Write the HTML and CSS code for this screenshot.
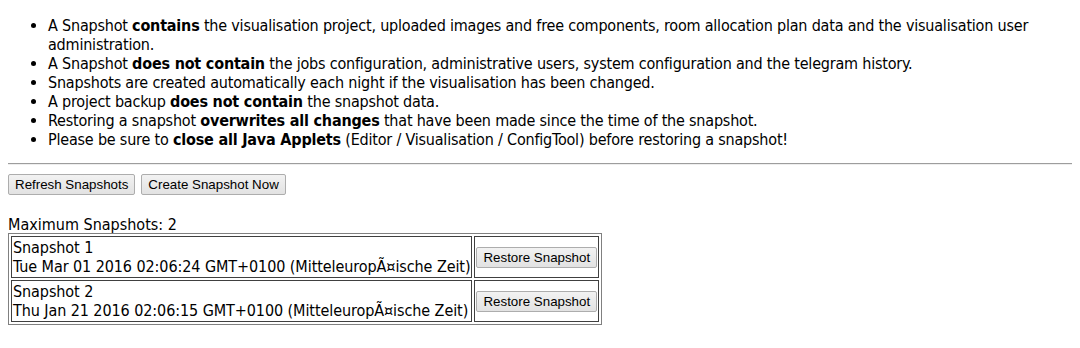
FILE: index.html
```html
<!DOCTYPE html>
<html>
<head>
<meta charset="utf-8">
<title>Snapshots</title>
<link rel="stylesheet" href="styles.css">
</head>
<body>
<ul class="info">
  <li>A Snapshot <b>contains</b> the visualisation project, uploaded images and free components, room allocation plan data and the visualisation user<br>administration.</li>
  <li>A Snapshot <b>does not contain</b> the jobs configuration, administrative users, system configuration and the telegram history.</li>
  <li>Snapshots are created automatically each night if the visualisation has been changed.</li>
  <li>A project backup <b>does not contain</b> the snapshot data.</li>
  <li>Restoring a snapshot <b>overwrites all changes</b> that have been made since the time of the snapshot.</li>
  <li>Please be sure to <b>close all Java Applets</b> (Editor / Visualisation / ConfigTool) before restoring a snapshot!</li>
</ul>
<hr class="sep">
<div class="actions">
  <button class="btn">Refresh Snapshots</button>
  <button class="btn">Create Snapshot Now</button>
</div>
<div class="max">Maximum Snapshots: 2</div>
<table class="snaps">
  <tr>
    <td class="desc">Snapshot 1<br>Tue Mar 01 2016 02:06:24 GMT+0100 (MitteleuropÃ¤ische Zeit)</td>
    <td class="act"><button class="btn">Restore Snapshot</button></td>
  </tr>
  <tr>
    <td class="desc">Snapshot 2<br>Thu Jan 21 2016 02:06:15 GMT+0100 (MitteleuropÃ¤ische Zeit)</td>
    <td class="act"><button class="btn">Restore Snapshot</button></td>
  </tr>
</table>
</body>
</html>
```
FILE: styles.css
```css
html, body {
  background: #ffffff;
}
body {
  margin: 0;
  padding: 16px 8px 0;
  font-family: "DejaVu Sans Condensed", "DejaVu Sans", sans-serif;
  font-stretch: condensed;
  font-size: 16px;
  line-height: 19px;
  color: #000000;
}
.info {
  margin: 0 0 1px;
  padding-left: 40px;
  letter-spacing: -0.2px;
}
.info b {
  font-weight: bold;
}
.sep {
  margin: 14px 0 0;
  height: 0;
  border: 0;
  border-top: 1px solid #9d9d9d;
  border-bottom: 1px solid #eeeeee;
}
.actions {
  margin-top: 9px;
  display: flex;
  gap: 6px;
  height: 21px;
}
.btn {
  font-family: "Liberation Sans", Arial, sans-serif;
  font-size: 13.33px;
  line-height: 15px;
  height: 21px;
  padding: 1px 6px;
  color: #000000;
  background: linear-gradient(#f2f2f2, #e2e2e2);
  border: 1px solid #adadad;
  border-radius: 2px;
  margin: 0;
  letter-spacing: 0;
}
.max {
  margin-top: 20px;
  height: 18px;
}
.snaps {
  border: 1px solid #808080;
  border-spacing: 2px;
  margin-top: 0;
}
.snaps td {
  border: 1px solid #404040;
  padding: 1px;
  vertical-align: middle;
}
.desc {
  letter-spacing: -0.08px;
}
.act .btn {
  display: block;
}
```
